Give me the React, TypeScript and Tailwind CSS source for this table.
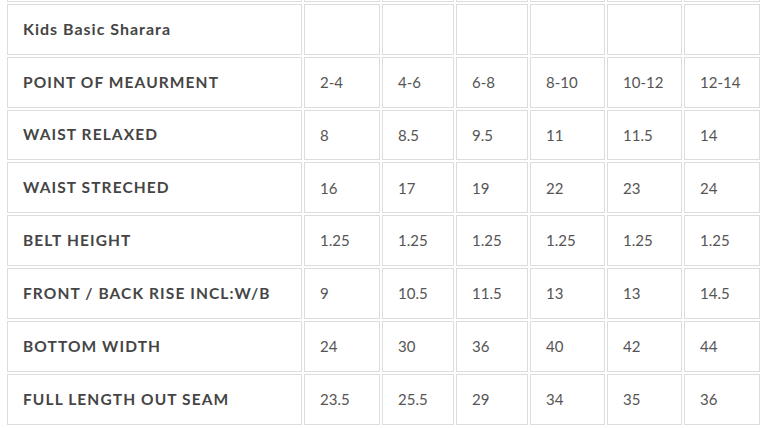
import React from 'react'

// tabla de medidas - Kids Basic Sharara
const sizes = ['2-4', '4-6', '6-8', '8-10', '10-12', '12-14']

const rows: { label: string; values: string[] }[] = [
  { label: 'WAIST RELAXED', values: ['8', '8.5', '9.5', '11', '11.5', '14'] },
  { label: 'WAIST STRECHED', values: ['16', '17', '19', '22', '23', '24'] },
  { label: 'BELT HEIGHT', values: ['1.25', '1.25', '1.25', '1.25', '1.25', '1.25'] },
  { label: 'FRONT / BACK RISE INCL:W/B', values: ['9', '10.5', '11.5', '13', '13', '14.5'] },
  { label: 'BOTTOM WIDTH', values: ['24', '30', '36', '40', '42', '44'] },
  { label: 'FULL LENGTH OUT SEAM', values: ['23.5', '25.5', '29', '34', '35', '36'] },
]

const labelCls =
  "h-[50.86px] border border-[#dddddd] pl-[15px] pr-2 text-left align-middle font-['Lato',sans-serif] text-[15.5px] font-bold tracking-[1.1px] text-[#454545]"
const valueCls =
  "h-[50.86px] border border-[#dddddd] pl-[15px] pr-2 text-left align-middle font-['Lato',sans-serif] text-[15px] font-normal tracking-[0px] text-[#555555]"

export default function App() {
  return (
    <div className="min-h-[428px] w-[765px] overflow-hidden bg-white">
      <div className="-mt-[51px] pl-[5px]">
        <table className="w-[757px] table-fixed border-separate border-spacing-[2px]">
          <colgroup>
            <col className="w-[295px]" />
            <col className="w-[76px]" />
            <col className="w-[72px]" />
            <col className="w-[72px]" />
            <col className="w-[75px]" />
            <col className="w-[75px]" />
            <col className="w-[76px]" />
          </colgroup>
          <tbody>
            <tr>
              <td className={labelCls}></td>
              {sizes.map(s => (
                <td key={s} className={valueCls}></td>
              ))}
            </tr>
            <tr>
              <td className={`${labelCls} text-[16px] tracking-[1px]`}>Kids Basic Sharara</td>
              {sizes.map(s => (
                <td key={s} className={valueCls}></td>
              ))}
            </tr>
            <tr>
              <td className={labelCls}>POINT OF MEAURMENT</td>
              {sizes.map(s => (
                <td key={s} className={valueCls}>{s}</td>
              ))}
            </tr>
            {rows.map(row => (
              <tr key={row.label}>
                <td className={labelCls}>{row.label}</td>
                {row.values.map((v, i) => (
                  <td key={i} className={valueCls}>{v}</td>
                ))}
              </tr>
            ))}
          </tbody>
        </table>
      </div>
    </div>
  )
}
